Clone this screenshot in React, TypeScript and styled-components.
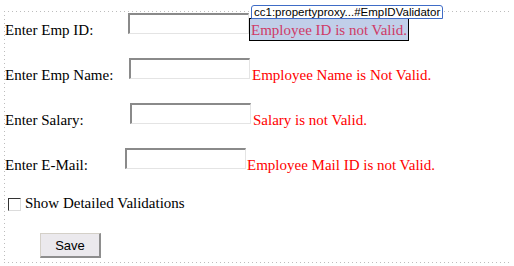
import React from 'react';
import styled, { createGlobalStyle } from 'styled-components';

const GlobalStyle = createGlobalStyle`
  body {
    margin: 0;
    background: #fff;
    font-family: "Liberation Serif", "Times New Roman", serif;
    font-size: 15px;
    color: #000;
  }
`;

const Frame = styled.div`
  box-sizing: border-box;
  margin: 11px 0 0 4px;
  width: 507px;
  height: 252px;
  padding: 2px 0 5px 1px;
  background:
    repeating-linear-gradient(to right, #bdbdbd 0 1px, transparent 1px 4px) top left / 100% 1px no-repeat,
    repeating-linear-gradient(to right, #bdbdbd 0 1px, transparent 1px 4px) bottom left / 100% 1px no-repeat,
    repeating-linear-gradient(to bottom, #bdbdbd 0 1px, transparent 1px 4px) top left / 1px 100% no-repeat;
`;

const Row = styled.div`
  display: flex;
  align-items: flex-start;
  height: 45px;
`;

const Label = styled.span<{ $w: number }>`
  width: ${p => p.$w}px;
  padding-top: 8px;
  line-height: 18px;
  white-space: nowrap;
`;

const TextBox = styled.input`
  box-sizing: border-box;
  width: 121px;
  height: 21px;
  margin: 0;
  padding: 0 2px;
  background: #fff;
  border-style: solid;
  border-width: 2px 1px 1px 2px;
  border-color: #8a8a8a #e4e4e4 #e4e4e4 #8a8a8a;
  outline: none;
`;

const Error = styled.span<{ $gap: number }>`
  margin-left: ${p => p.$gap}px;
  padding-top: 8px;
  line-height: 18px;
  color: #ff0000;
  white-space: nowrap;
`;

const SelectedError = styled.span`
  position: relative;
  margin-top: 5px;
  padding: 2px 1px 1px 1px;
  line-height: 18px;
  border: 1px solid #000;
  background: #c1cfe9;
  color: #cf3a66;
  white-space: nowrap;
`;

const Tag = styled.span`
  position: absolute;
  left: 1px;
  bottom: 100%;
  box-sizing: border-box;
  height: 14px;
  padding: 0 2px;
  border: 1px solid #3f6cc6;
  border-radius: 3px 3px 0 0;
  background: #fff;
  color: #000;
  font-family: "Liberation Sans", Arial, sans-serif;
  font-size: 11.5px;
  line-height: 12px;
`;

const CheckRow = styled.label`
  display: flex;
  align-items: flex-start;
  height: 40px;
`;

const Check = styled.input`
  appearance: none;
  box-sizing: border-box;
  width: 13px;
  height: 13px;
  margin: 5px 4px 0 3px;
  background: #fff;
  border-style: solid;
  border-width: 1px;
  border-color: #333 #dcdcdc #dcdcdc #333;
`;

const CheckText = styled.span`
  padding-top: 1px;
  line-height: 18px;
`;

const SaveButton = styled.button`
  box-sizing: border-box;
  width: 61px;
  height: 25px;
  margin-left: 35px;
  padding: 0;
  background: #ebe9ed;
  border-style: solid;
  border-width: 1px 2px 2px 1px;
  border-color: #d4d0c8 #8e8e8e #8e8e8e #d4d0c8;
  font-family: "Liberation Sans", Arial, sans-serif;
  font-size: 13px;
  color: #000;
`;

const fields = [
  { label: 'Enter Emp Name:', w: 124, gap: 2, error: 'Employee Name is Not Valid.' },
  { label: 'Enter Salary:', w: 125, gap: 2, error: 'Salary is not Valid.' },
  { label: 'Enter E-Mail:', w: 120, gap: 1, error: 'Employee Mail ID is not Valid.' },
];

export default function App() {
  return (
    <>
      <GlobalStyle />
      <Frame>
        <Row>
          <Label $w={123}>Enter Emp ID:</Label>
          <TextBox type="text" />
          <SelectedError>
            <Tag>cc1:propertyproxy...#EmpIDValidator</Tag>
            Employee ID is not Valid.
          </SelectedError>
        </Row>
        {fields.map(f => (
          <Row key={f.label}>
            <Label $w={f.w}>{f.label}</Label>
            <TextBox type="text" />
            <Error $gap={f.gap}>{f.error}</Error>
          </Row>
        ))}
        <CheckRow>
          <Check type="checkbox" />
          <CheckText>Show Detailed Validations</CheckText>
        </CheckRow>
        <SaveButton>Save</SaveButton>
      </Frame>
    </>
  );
}
